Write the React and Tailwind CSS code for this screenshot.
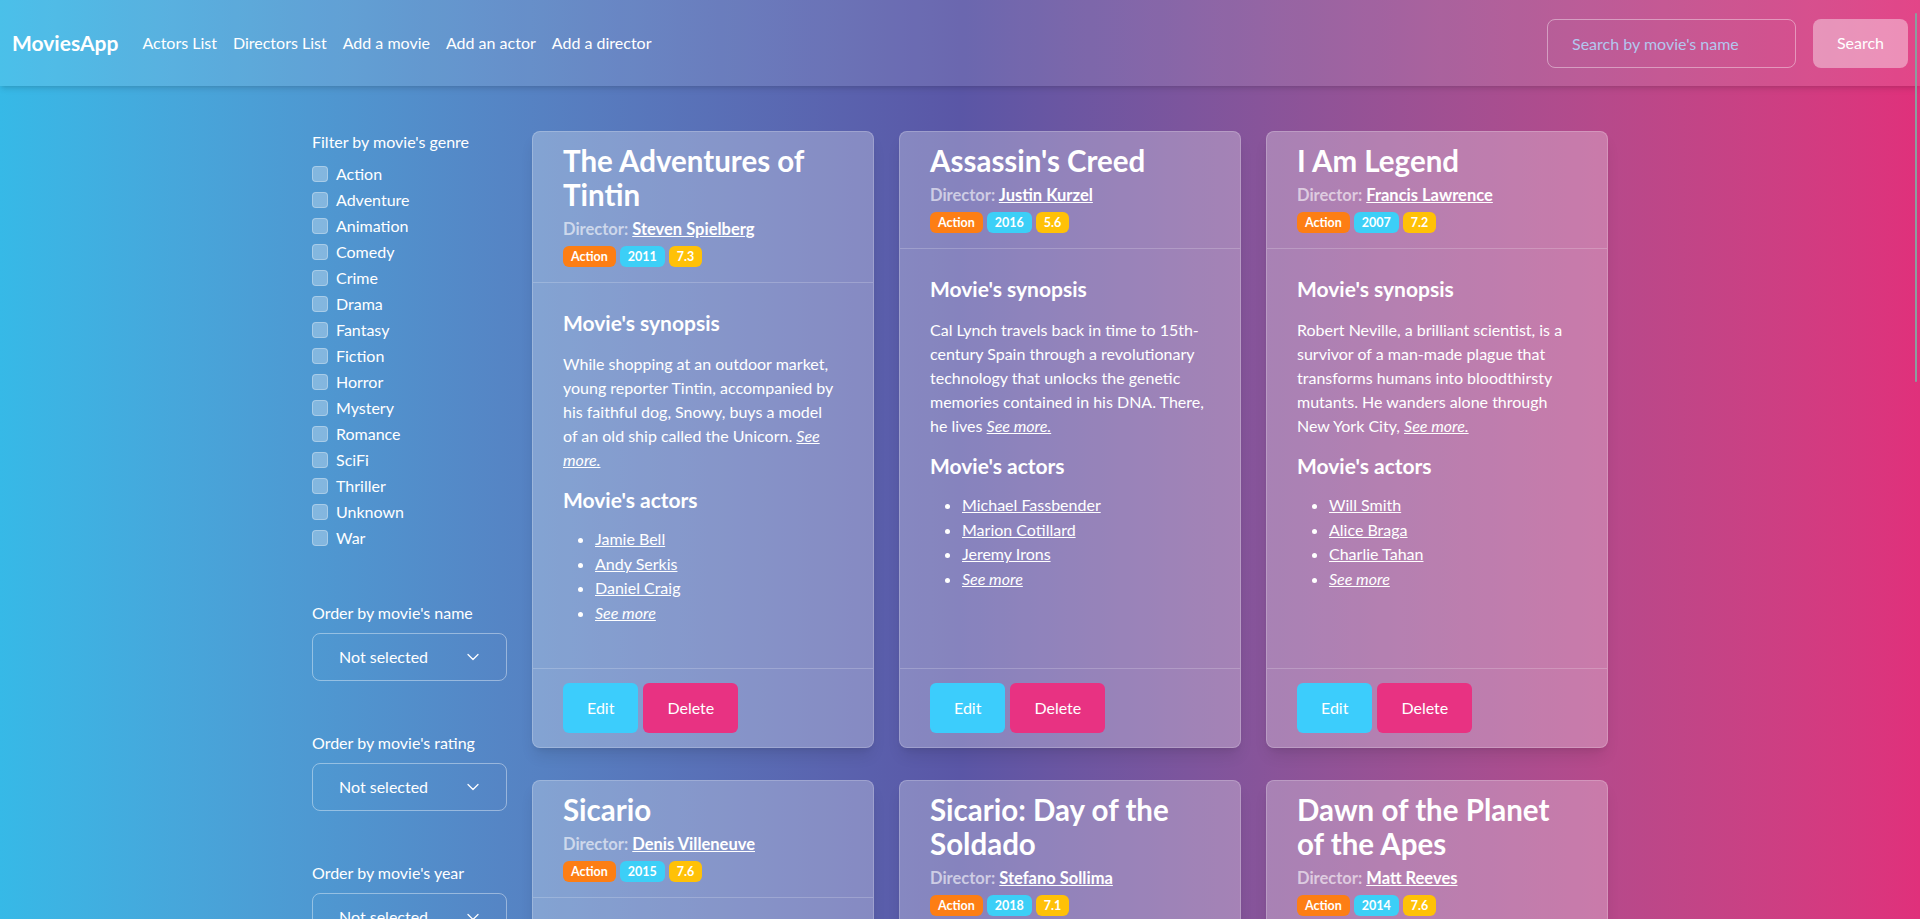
import { ChevronDown } from 'lucide-react'

const GENRES = ['Action', 'Adventure', 'Animation', 'Comedy', 'Crime', 'Drama', 'Fantasy', 'Fiction', 'Horror', 'Mystery', 'Romance', 'SciFi', 'Thriller', 'Unknown', 'War']

const NAV_LINKS = ['Actors List', 'Directors List', 'Add a movie', 'Add an actor', 'Add a director']

const ORDERS = ["Order by movie's name", "Order by movie's rating", "Order by movie's year"]

const MOVIES = [
  {
    title: 'The Adventures of Tintin',
    director: 'Steven Spielberg',
    genre: 'Action',
    year: 2011,
    rating: '7.3',
    synopsis: 'While shopping at an outdoor market, young reporter Tintin, accompanied by his faithful dog, Snowy, buys a model of an old ship called the Unicorn.',
    actors: ['Jamie Bell', 'Andy Serkis', 'Daniel Craig'],
  },
  {
    title: "Assassin's Creed",
    director: 'Justin Kurzel',
    genre: 'Action',
    year: 2016,
    rating: '5.6',
    synopsis: 'Cal Lynch travels back in time to 15th-century Spain through a revolutionary technology that unlocks the genetic memories contained in his DNA. There, he lives',
    actors: ['Michael Fassbender', 'Marion Cotillard', 'Jeremy Irons'],
  },
  {
    title: 'I Am Legend',
    director: 'Francis Lawrence',
    genre: 'Action',
    year: 2007,
    rating: '7.2',
    synopsis: 'Robert Neville, a brilliant scientist, is a survivor of a man-made plague that transforms humans into bloodthirsty mutants. He wanders alone through New York City,',
    actors: ['Will Smith', 'Alice Braga', 'Charlie Tahan'],
  },
  {
    title: 'Sicario',
    director: 'Denis Villeneuve',
    genre: 'Action',
    year: 2015,
    rating: '7.6',
    synopsis: 'An idealistic FBI agent is enlisted by a government task force to aid in the escalating war against drugs at the border area between the U.S. and Mexico.',
    actors: ['Emily Blunt', 'Josh Brolin', 'Benicio Del Toro'],
  },
  {
    title: 'Sicario: Day of the Soldado',
    director: 'Stefano Sollima',
    genre: 'Action',
    year: 2018,
    rating: '7.1',
    synopsis: 'The drug war on the U.S.-Mexico border has escalated as the cartels have begun trafficking terrorists across the US border.',
    actors: ['Benicio Del Toro', 'Josh Brolin', 'Isabela Merced'],
  },
  {
    title: 'Dawn of the Planet of the Apes',
    director: 'Matt Reeves',
    genre: 'Action',
    year: 2014,
    rating: '7.6',
    synopsis: 'A growing nation of genetically evolved apes led by Caesar is threatened by a band of human survivors of the devastating virus.',
    actors: ['Gary Oldman', 'Keri Russell', 'Andy Serkis'],
  },
]

function MovieCard({ movie }) {
  return (
    <div className="flex flex-col rounded-lg border border-white/20 bg-white/[0.27] text-white shadow-lg">
      <div className="border-b border-white/20 pt-3 pr-[34px] pb-[15px] pl-[30px]">
        <h2 className="text-[29.5px] font-bold leading-[34px]">{movie.title}</h2>
        <p className="mt-1.5 text-[16.5px] font-bold leading-[22px] text-white/60">
          Director: <a href="#" className="text-white underline">{movie.director}</a>
        </p>
        <div className="mt-[6px] flex gap-1 text-[12.5px] font-bold leading-[21px]">
          <span className="rounded-md bg-[#fd7e14] px-2">{movie.genre}</span>
          <span className="rounded-md bg-[#3ccff7] px-2">{movie.year}</span>
          <span className="rounded-md bg-[#ffc107] px-2">{movie.rating}</span>
        </div>
      </div>

      <div className="flex-1 pt-7 pr-[34px] pb-7 pl-[30px]">
        <h3 className="text-[21px] font-bold leading-6">Movie's synopsis</h3>
        <p className="mt-[17px] text-base leading-6">
          {movie.synopsis}{' '}
          <a href="#" className="italic underline">See more.</a>
        </p>
        <h3 className="mt-4 text-[21px] font-bold leading-6">Movie's actors</h3>
        <ul className="mt-[15px] mb-[14px] list-disc pl-8 text-base leading-[24.7px]">
          {movie.actors.map((a) => (
            <li key={a}>
              <a href="#" className="underline">{a}</a>
            </li>
          ))}
          <li>
            <a href="#" className="italic underline">See more</a>
          </li>
        </ul>
      </div>

      <div className="flex gap-[5px] border-t border-white/20 px-[30px] py-3.5">
        <button className="h-[50px] rounded-md bg-[#3ccdfc] px-6 text-base">Edit</button>
        <button className="h-[50px] rounded-md bg-[#e83282] px-6 text-base">Delete</button>
      </div>
    </div>
  )
}

export default function App() {
  return (
    <div className="relative h-screen overflow-y-auto bg-linear-to-r from-[#36b9e7] via-[#5a56a6] via-50% to-[#e0307b] font-['Lato','Open_Sans',sans-serif] text-white [scrollbar-width:none]">
      {/* Navbar */}
      <nav className="flex h-[86px] items-center bg-white/10 px-3 shadow-md">
        <a href="#" className="text-[21px] font-bold">MoviesApp</a>
        <div className="ml-[24px] flex gap-4 text-base">
          {NAV_LINKS.map((l) => (
            <a key={l} href="#">{l}</a>
          ))}
        </div>
        <div className="ml-auto flex gap-[17px]">
          <input
            type="text"
            placeholder="Search by movie's name"
            className="h-[49px] w-[249px] rounded-lg border border-white/40 bg-transparent px-6 text-base text-white placeholder:text-[#b3c7ee] focus:outline-none"
          />
          <button className="h-[49px] w-[95px] rounded-lg bg-white/40 text-base">Search</button>
        </div>
      </nav>

      <div className="mx-auto flex w-[1296px] gap-[25px] pt-[45px] pb-16">
        {/* Sidebar */}
        <aside className="w-[195px] shrink-0 text-base">
          <p className="leading-[22px]">Filter by movie's genre</p>
          <div className="mt-[8px] flex flex-col">
            {GENRES.map((g) => (
              <label key={g} className="flex h-[26px] items-center gap-2">
                <input type="checkbox" className="size-4 appearance-none rounded border border-white/30 bg-white/30" />
                <span>{g}</span>
              </label>
            ))}
          </div>

          <div className="mt-[51px] flex flex-col gap-[51px]">
            {ORDERS.map((o) => (
              <div key={o}>
                <p className="leading-[22px]">{o}</p>
                <div className="mt-[9px] flex h-[48px] items-center justify-between rounded-lg border border-white/40 pr-[23px] pl-[26px]">
                  <span>Not selected</span>
                  <ChevronDown className="h-5 w-5" strokeWidth={1.5} />
                </div>
              </div>
            ))}
          </div>
        </aside>

        {/* Movies grid */}
        <main className="grid flex-1 grid-cols-3 content-start gap-x-[25px] gap-y-[32px]">
          {MOVIES.map((m) => (
            <MovieCard key={m.title} movie={m} />
          ))}
        </main>
      </div>

      {/* overlay scrollbar thumb */}
      <div className="pointer-events-none fixed top-[13px] right-[3px] h-[369px] w-[2px] rounded-full bg-[#8c9c9e]" />
    </div>
  )
}
